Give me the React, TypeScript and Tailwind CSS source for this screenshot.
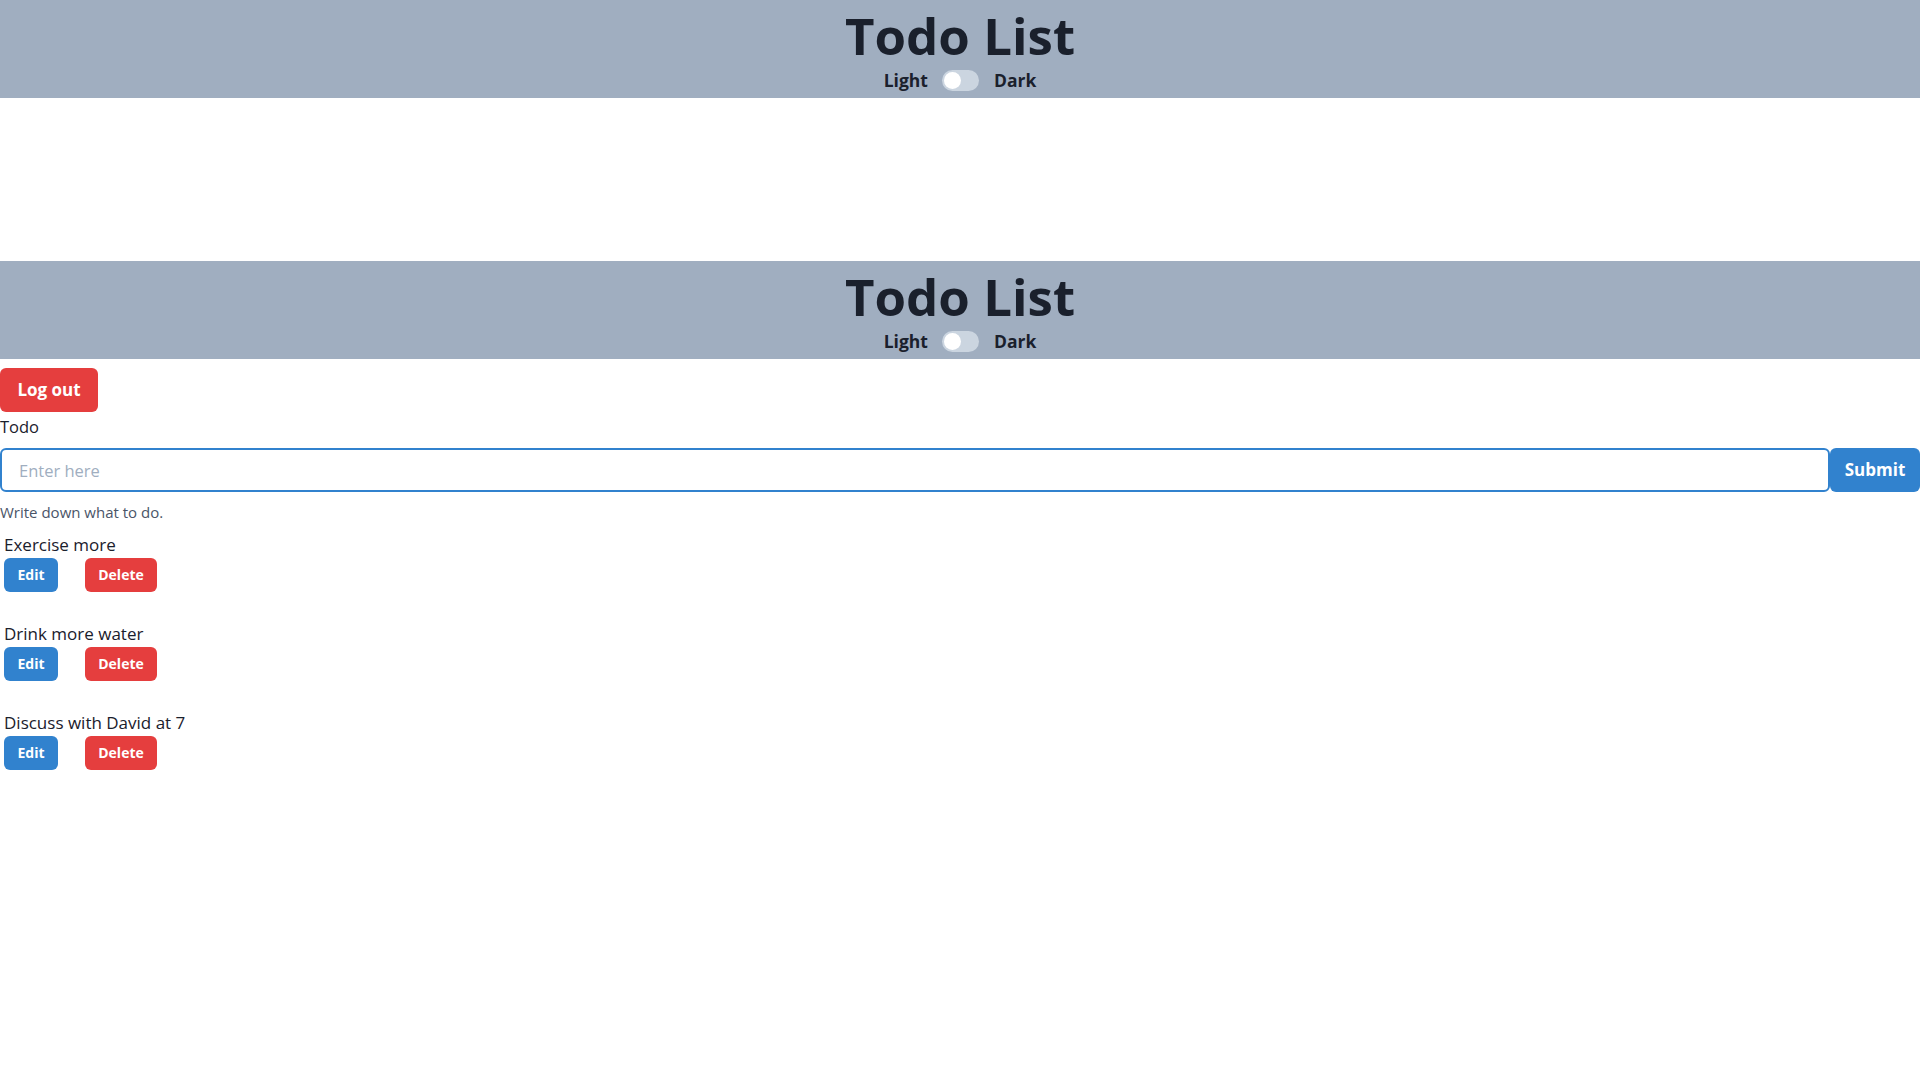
const todos = ["Exercise more", "Drink more water", "Discuss with David at 7"];

function Header() {
  return (
    <header className="bg-[#a0aec0] h-[98px] flex flex-col items-center text-[#1a202c]">
      <h1 className="pt-[5px] text-[51px] leading-[60px] font-bold">Todo List</h1>
      <div className="mt-[3px] flex items-center text-[17.5px] leading-6 font-bold">
        <span>Light</span>
        <span className="ml-[14px] mr-[15px] w-[37px] h-[21px] rounded-full bg-[#cbd5e0] p-[2px] flex items-center">
          <span className="w-[17px] h-[17px] rounded-full bg-white" />
        </span>
        <span>Dark</span>
      </div>
    </header>
  );
}

function TodoItem({ text }: { text: string }) {
  return (
    <div className="p-1 mb-[21px]">
      <p className="text-[17px] leading-[26px] text-[#1a202c]">{text}</p>
      <div className="flex items-center">
        <button
          type="button"
          className="w-[54px] h-[34px] rounded-md bg-[#3182ce] text-white text-sm font-bold"
        >
          Edit
        </button>
        <button
          type="button"
          className="ml-[27px] w-[72px] h-[34px] rounded-md bg-[#e53e3e] text-white text-sm font-bold"
        >
          Delete
        </button>
      </div>
    </div>
  );
}

export default function App() {
  return (
    <div className="min-h-screen bg-white" style={{ fontFamily: '"Open Sans", "Noto Sans", sans-serif' }}>
      <Header />
      <div className="h-[163px]" />
      <Header />
      <main>
        <button
          type="button"
          className="mt-[9px] w-[98px] h-[44px] rounded-md bg-[#e53e3e] text-white text-[17px] font-bold"
        >
          Log out
        </button>
        <label className="block text-[16.5px] leading-[30px] mb-[6px] text-[#1a202c]">Todo</label>
        <div className="flex">
          <input
            type="text"
            placeholder="Enter here"
            className="flex-1 h-[44px] border-2 border-[#3182ce] rounded-md pl-[17px] text-[16.5px] outline-none placeholder:text-[#a0aec0]"
          />
          <button
            type="button"
            className="w-[90px] h-[44px] rounded-md bg-[#3182ce] text-white text-[17px] font-bold"
          >
            Submit
          </button>
        </div>
        <p className="mt-[10px] text-[15px] leading-[21px] text-[#4a5568]">Write down what to do.</p>
        <div className="mt-[5px]">
          {todos.map((t) => (
            <TodoItem key={t} text={t} />
          ))}
        </div>
      </main>
    </div>
  );
}
